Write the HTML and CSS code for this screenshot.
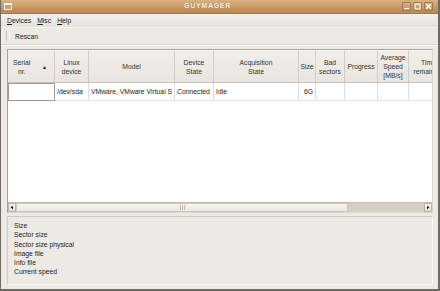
FILE: index.html
```html
<!DOCTYPE html>
<html>
<head>
<meta charset="utf-8">
<link rel="stylesheet" href="styles.css">
</head>
<body>
<div class="window">
  <div class="titlebar">
    <div class="win-icon"></div>
    <div class="title">GUYMAGER</div>
    <div class="win-buttons">
      <div class="wbtn"><svg width="7" height="7" viewBox="0 0 7 7"><rect x="1" y="5" width="5" height="1.2" fill="#fff"/></svg></div>
      <div class="wbtn"><svg width="7" height="7" viewBox="0 0 7 7"><rect x="1" y="1" width="5" height="5" fill="none" stroke="#fff" stroke-width="1"/></svg></div>
      <div class="wbtn"><svg width="7" height="7" viewBox="0 0 7 7"><path d="M1.2 1.2 L5.8 5.8 M5.8 1.2 L1.2 5.8" stroke="#fff" stroke-width="1.3"/></svg></div>
    </div>
  </div>
  <div class="menubar">
    <span class="menu"><u>D</u>evices</span>
    <span class="menu"><u>M</u>isc</span>
    <span class="menu"><u>H</u>elp</span>
  </div>
  <div class="toolbar">
    <div class="handle"></div>
    <span class="tbtn">Rescan</span>
  </div>
  <div class="content">
    <div class="tableframe">
      <div class="grid">
        <div class="hc serial">Serial<br>nr.<span class="sort">&#9650;</span></div>
        <div class="hc">Linux<br>device</div>
        <div class="hc">Model</div>
        <div class="hc">Device<br>State</div>
        <div class="hc">Acquisition<br>State</div>
        <div class="hc">Size</div>
        <div class="hc">Bad<br>sectors</div>
        <div class="hc">Progress</div>
        <div class="hc">Average<br>Speed<br>[MB/s]</div>
        <div class="hc last">Time<br>remaining</div>

        <div class="dc edit"></div>
        <div class="dc">/dev/sda</div>
        <div class="dc">VMware, VMware Virtual S</div>
        <div class="dc">Connected</div>
        <div class="dc">Idle</div>
        <div class="dc right">6G</div>
        <div class="dc"></div>
        <div class="dc"></div>
        <div class="dc"></div>
        <div class="dc last"></div>
      </div>
      <div class="empty"></div>
      <div class="hscroll">
        <div class="arrow"><svg width="7" height="7" viewBox="0 0 7 7"><path d="M4.5 1.5 L2 3.5 L4.5 5.5 Z" fill="#000"/></svg></div>
        <div class="thumb"><div class="grip"></div></div>
        <div class="trough"></div>
        <div class="arrow"><svg width="7" height="7" viewBox="0 0 7 7"><path d="M2.5 1.5 L5 3.5 L2.5 5.5 Z" fill="#000"/></svg></div>
      </div>
    </div>
    <div class="info">
      <div>Size</div>
      <div>Sector size</div>
      <div>Sector size physical</div>
      <div>Image file</div>
      <div>Info file</div>
      <div>Current speed</div>
    </div>
  </div>
</div>
</body>
</html>
```
FILE: styles.css
```css
html, body {
  margin: 0;
  padding: 0;
  background: #edeae6;
}
.window {
  width: 440px;
  height: 291px;
  box-sizing: border-box;
  border-left: 1px solid #6f6a62;
  border-right: 2px solid #6f6a62;
  border-bottom: 2px solid #6f6a62;
  background: #edeae6;
  display: flex;
  flex-direction: column;
  font-family: "Liberation Sans", Arial, sans-serif;
  font-size: 6.8px;
  color: #1a1a1a;
  overflow: hidden;
}
.titlebar {
  height: 13px;
  flex: none;
  background: linear-gradient(#dbb283, #c7965f 60%, #bb8a54);
  display: flex;
  align-items: center;
  position: relative;
  border-bottom: 1px solid #9e7a50;
}
.win-icon {
  width: 8px;
  height: 7px;
  margin-left: 3px;
  border: 1px solid #f4ede3;
  border-top-width: 2px;
  box-sizing: border-box;
  background: #c9a06e;
}
.title {
  position: absolute;
  left: 0;
  right: 24px;
  text-align: center;
  color: #fbf5ec;
  font-weight: bold;
  font-size: 7px;
  letter-spacing: 0.7px;
  text-shadow: 0 0 1px #8a6438;
  top: 2px;
}
.win-buttons {
  margin-left: auto;
  margin-right: 5px;
  display: flex;
  gap: 2px;
}
.wbtn {
  width: 9px;
  height: 9px;
  box-sizing: border-box;
  border: 1px solid #a07a4d;
  border-radius: 1px;
  background: linear-gradient(#d7b387, #bf9262);
  display: flex;
  align-items: center;
  justify-content: center;
}
.menubar {
  height: 13px;
  flex: none;
  background: linear-gradient(#f2f0ed, #e5e2dd);
  display: flex;
  align-items: center;
  padding-left: 6px;
  gap: 6px;
  font-size: 6.8px;
  border-bottom: 1px solid #f7f5f2;
}
.menu u { text-decoration: underline; }
.toolbar {
  height: 16px;
  flex: none;
  display: flex;
  align-items: center;
  border-bottom: 1px solid #d9d4cd;
  box-shadow: 0 1px 0 #fbfaf8;
}
.handle {
  width: 2px;
  height: 10px;
  margin-left: 5px;
  border-left: 1px solid #c9c3bb;
  border-right: 1px solid #fbfaf8;
}
.tbtn {
  margin-left: 5px;
}
.content {
  flex: 1;
  padding: 4px 5px 4px 6px;
  display: flex;
  flex-direction: column;
  gap: 3px;
}
.tableframe {
  height: 164px;
  box-sizing: border-box;
  border: 1px solid #a9a39b;
  border-right-color: #dcd7d0;
  border-bottom-color: #dcd7d0;
  background: #fff;
  display: flex;
  flex-direction: column;
  overflow: hidden;
}
.grid {
  display: grid;
  grid-template-columns: 47px 34px 86px 39px 85px 17px 29px 33px 31px 40px;
  grid-template-rows: 33px 18px;
  width: 460px;
}
.hc {
  background: linear-gradient(#f1eeea, #e9e5e0);
  border-right: 1px solid #d3cec7;
  border-bottom: 1px solid #c8c2ba;
  border-top: 1px solid #fbfaf8;
  display: flex;
  align-items: center;
  justify-content: center;
  text-align: center;
  line-height: 9px;
  color: #333;
  position: relative;
}
.hc.serial {
  justify-content: flex-start;
  padding-left: 5px;
}
.sort {
  position: absolute;
  right: 7px;
  top: 12px;
  font-size: 5px;
  color: #222;
}
.dc {
  border-right: 1px solid #dedbd7;
  border-bottom: 1px solid #e6e3df;
  display: flex;
  align-items: center;
  padding-left: 2px;
  white-space: nowrap;
  overflow: hidden;
  color: #1a1a1a;
}
.dc.right { justify-content: flex-end; padding-right: 2px; }
.dc.edit {
  border: 1px solid #a09a92;
  background: #fff;
}
.empty { flex: 1; }
.hscroll {
  height: 9px;
  flex: none;
  display: flex;
  background: #d6cec5;
  border-top: 1px solid #c5bdb4;
}
.arrow {
  width: 8px;
  height: 9px;
  box-sizing: border-box;
  border: 1px solid #bdb6ad;
  background: linear-gradient(#f7f5f2, #e2ddd6);
  display: flex;
  align-items: center;
  justify-content: center;
}
.thumb {
  width: 332px;
  box-sizing: border-box;
  border: 1px solid #cbc4bb;
  background: linear-gradient(#f8f6f3, #ebe7e2);
  display: flex;
  align-items: center;
  justify-content: center;
}
.grip {
  width: 5px;
  height: 5px;
  background: repeating-linear-gradient(90deg, #bdb6ad 0 1px, transparent 1px 2px);
}
.trough { flex: 1; }
.info {
  flex: 1;
  box-sizing: border-box;
  border: 1px solid #cfc9c1;
  border-right-color: #fbfaf8;
  border-bottom-color: #fbfaf8;
  padding: 4px 6px;
  line-height: 9.3px;
  color: #1a1a1a;
}
```
